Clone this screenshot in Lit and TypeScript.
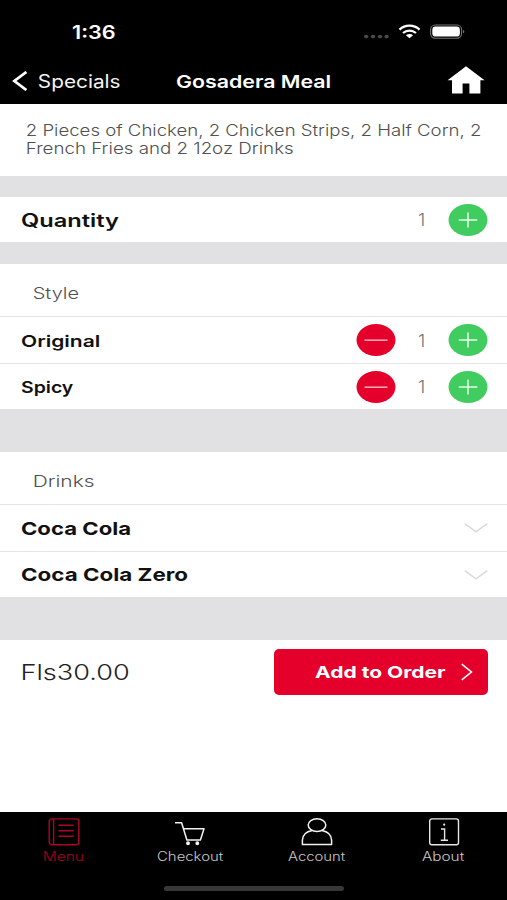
import { LitElement, html, css, svg } from "lit";
import { customElement, property } from "lit/decorators.js";

/** A single line of text stretched horizontally so its ink fills `span` pixels. */
@customElement("wide-text")
class WideText extends LitElement {
  @property() label = "";
  @property({ type: Number }) span = 100;

  static styles = css`
    :host { display: block; flex: none; line-height: 20px; white-space: nowrap; }
    .ink { display: inline-block; transform-origin: 0 50%; vertical-align: top; }
  `;

  render() {
    return html`<span class="ink">${this.label}</span>`;
  }

  updated() {
    const ink = this.renderRoot.querySelector(".ink") as HTMLElement;
    const cs = getComputedStyle(ink);
    const ctx = document.createElement("canvas").getContext("2d")!;
    ctx.font = `${cs.fontWeight} ${cs.fontSize} ${cs.fontFamily}`;
    const m = ctx.measureText(this.label);
    const scale = this.span / (m.actualBoundingBoxLeft + m.actualBoundingBoxRight);
    this.style.width = `${this.span}px`;
    ink.style.width = `${this.span}px`;
    ink.style.transform = `translateX(${m.actualBoundingBoxLeft * scale}px) scaleX(${scale})`;
  }
}

const plus = html`<svg class="round" width="40" height="32" viewBox="0 0 40 32">
  <ellipse cx="20" cy="16" rx="19.5" ry="16" fill="#41cc60" />
  <path d="M10.7 16H29.3M20 8.5V23.5" stroke="#e4fbe8" stroke-width="1.6" fill="none" />
</svg>`;

const minus = html`<svg class="round" width="40" height="32" viewBox="0 0 40 32">
  <ellipse cx="20" cy="16" rx="19.5" ry="16" fill="#e4002b" />
  <path d="M8.5 16.2H31.5" stroke="#fba6b2" stroke-width="1.6" fill="none" />
</svg>`;

const down = html`<svg width="24" height="12" viewBox="0 0 24 12">
  <path d="M0.8 1.6L12 9.8L23.2 1.6" stroke="#d9d9db" stroke-width="1.5" fill="none" />
</svg>`;

const icons = {
  menu: svg`<g stroke="#b00426" fill="none" stroke-width="1.4">
    <rect x="1.2" y="0.9" width="29.6" height="25.8" rx="2.6" />
    <path d="M5.6 1V26.6" />
    <path d="M10.5 7.3H25.5M10.5 12.8H25.5M10.5 18.3H25.5" />
  </g>`,
  cart: svg`<g stroke="#f2f2f2" fill="none" stroke-width="1.5" stroke-linejoin="round">
    <path d="M1 4.7H7.6L12.9 22H26.4L30 10.8H9.4" />
    <circle cx="14" cy="25.3" r="1.2" fill="#f2f2f2" />
    <circle cx="23.3" cy="25.3" r="1.2" fill="#f2f2f2" />
  </g>`,
  person: svg`<g stroke="#f2f2f2" fill="none" stroke-width="1.5" stroke-linejoin="round">
    <ellipse cx="16" cy="7.1" rx="8.8" ry="6.3" />
    <path d="M11.2 12.5C5.3 13.6 1.6 17.4 1.4 22.2V26.6H30.6V22.2C30.4 17.4 26.7 13.6 20.8 12.5" />
  </g>`,
  info: svg`<g stroke="#e6e6e6" fill="none" stroke-width="1.4">
    <rect x="1.7" y="0.9" width="28.8" height="25.8" rx="2.2" />
    <path d="M13 11H16.6V22.2M12.8 22.3H20" />
    <circle cx="16.2" cy="6.7" r="1.1" fill="#e6e6e6" stroke="none" />
  </g>`,
};

@customElement("app-root")
class AppRoot extends LitElement {
  static styles = css`
    :host {
      display: flex; flex-direction: column; width: 507px; height: 900px;
      box-sizing: border-box; overflow: hidden; background: #fff; color: #111;
      font-family: Inter, "Open Sans", sans-serif;
    }
    svg { display: block; flex: none; }
    .status {
      height: 64px; background: #000; color: #fff; display: flex; align-items: center;
      padding: 0 41px 0 72px; box-sizing: border-box;
    }
    .clock { font-size: 18px; font-weight: 600; margin-right: auto; padding-top: 1px; }
    .nav {
      height: 40px; background: #000; color: #fff; display: flex; align-items: center;
      padding: 0 22px 6px 12px; box-sizing: border-box;
    }
    .nav wide-text { padding-top: 1px; }
    .home { margin-bottom: 2px; }
    .back { font-size: 18px; margin-left: 10.5px; margin-right: 56.5px; color: #f4f4f4; }
    .title { font-size: 17.3px; font-weight: 600; margin-right: auto; }
    .desc {
      height: 72px; box-sizing: border-box; padding: 18px 0 0 27px; font-size: 15.8px;
      color: #505050; font-weight: 300;
    }
    .desc wide-text { line-height: 18px; }
    .gap { background: #e1e1e3; flex: none; }
    .g1 { height: 21px; } .g2 { height: 22px; } .g3 { height: 43px; } .g4 { height: 43px; }
    .row {
      display: flex; align-items: center; justify-content: space-between;
      box-sizing: border-box; height: 45px; padding: 0 19px 0 20.5px; flex: none;
    }
    .row > wide-text { padding-top: 2px; }
    .line { border-top: 1px solid #e6e6e8; height: 46.5px; padding-top: 1px; }
    .line > wide-text { padding-top: 1px; }
    .big { font-size: 18px; font-weight: 600; }
    .bold { font-size: 18px; font-weight: 650; }
    .small { font-size: 16px; font-weight: 600; }
    .heading {
      height: 52px; box-sizing: border-box; padding: 19px 0 0 34px; font-size: 16.3px;
      font-weight: 300; color: #505050;
    }
    .step { display: flex; align-items: center; }
    .count { font-size: 17px; font-weight: 300; color: #777; margin: 0 23.5px 0 22.5px; padding-top: 1px; }
    .total {
      display: flex; align-items: flex-start; justify-content: space-between;
      height: 172px; padding: 9px 19px 0 23px; box-sizing: border-box;
    }
    .price { font-size: 22px; font-weight: 300; color: #222; margin-top: 13px; }
    .add {
      width: 214px; height: 46px; border-radius: 5px; background: #e4002b; color: #fff;
      display: flex; align-items: center; box-sizing: border-box; padding-left: 40.5px; gap: 15.5px;
      font-size: 16.3px; font-weight: 700;
    }
    .tabs {
      flex: 1; background: #000; display: grid; grid-template-columns: repeat(4, 126.6px);
      grid-template-rows: 69px 1fr; color: #c9c9c9; font-size: 12.6px; font-weight: 300;
    }
    .tab { display: flex; flex-direction: column; align-items: center; padding: 6px 0 0 1px; }
    .tab wide-text { line-height: 20px; margin-top: 1px; }
    .tab.on { color: #a80022; }
    .pill { grid-column: 1 / -1; width: 180px; height: 5px; border-radius: 3px; background: #373737; margin: 5px 0 0 164px; }
  `;

  private text(cls: string, label: string, span: number) {
    return html`<wide-text class=${cls} .label=${label} .span=${span}></wide-text>`;
  }

  private tab(icon: unknown, label: string, span: number, on = false) {
    return html`<div class="tab ${on ? "on" : ""}">
      <svg width="32" height="28" viewBox="0 0 32 28">${icon}</svg>
      ${this.text("", label, span)}
    </div>`;
  }

  private stepper(withMinus: boolean) {
    return html`<div class="step">
      ${withMinus ? minus : ""}${this.text("count", "1", 6.5)}${plus}
    </div>`;
  }

  render() {
    return html`
      <div class="status">
        ${this.text("clock", "1:36", 43)}
        <svg width="104" height="18" viewBox="0 0 104 18">
          <g fill="#4a4a4a">
            <ellipse cx="4.2" cy="13.6" rx="2.2" ry="1.8" /><ellipse cx="11" cy="13.6" rx="2.2" ry="1.8" />
            <ellipse cx="18" cy="13.6" rx="2.2" ry="1.8" /><ellipse cx="24.6" cy="13.6" rx="2.2" ry="1.8" />
          </g>
          <g fill="none" stroke="#fff" stroke-width="2.3">
            <path d="M37.5 6.6C43.2 1.4 51.8 1.4 57.5 6.6" />
            <path d="M41 10C44.8 6.7 50.2 6.7 54 10" />
          </g>
          <path d="M47.5 15.2L43.9 12.3C46 10.6 49 10.6 51.1 12.3Z" fill="#fff" />
          <rect x="68.6" y="2" width="31" height="13.2" rx="4.6" fill="none" stroke="#777" stroke-width="1.1" />
          <rect x="70.3" y="3.6" width="27.6" height="10" rx="3.4" fill="#fff" />
          <path d="M101 6.9C102.8 7.3 102.8 9.9 101 10.3Z" fill="#777" />
        </svg>
      </div>
      <div class="nav">
        <svg width="16" height="20" viewBox="0 0 16 20">
          <path d="M14.4 1L2.4 10L14.4 19" fill="none" stroke="#fff" stroke-width="2.8" />
        </svg>
        ${this.text("back", "Specials", 81)}
        ${this.text("title", "Gosadera Meal", 154.5)}
        <svg class="home" width="38" height="28" viewBox="0 0 38 28">
          <path d="M19 0.3L37.6 14.3H33.4V27.6H22.4V17.4H15.6V27.6H5V14.3H0.6Z" fill="#fff" />
        </svg>
      </div>
      <div class="desc">
        ${this.text("", "2 Pieces of Chicken, 2 Chicken Strips, 2 Half Corn, 2", 453.5)}
        ${this.text("", "French Fries and 2 12oz Drinks", 266.5)}
      </div>
      <div class="gap g1"></div>
      <div class="row">${this.text("big", "Quantity", 98.5)}${this.stepper(false)}</div>
      <div class="gap g2"></div>
      <div class="heading">${this.text("", "Style", 44.5)}</div>
      <div class="row line">${this.text("small", "Original", 79)}${this.stepper(true)}</div>
      <div class="row line">${this.text("small", "Spicy", 53)}${this.stepper(true)}</div>
      <div class="gap g3"></div>
      <div class="heading">${this.text("", "Drinks", 60)}</div>
      <div class="row line">${this.text("bold", "Coca Cola", 109.5)}${down}</div>
      <div class="row line">${this.text("bold", "Coca Cola Zero", 167)}${down}</div>
      <div class="gap g4"></div>
      <div class="total">
        ${this.text("price", "Fls30.00", 106)}
        <div class="add">
          ${this.text("", "Add to Order", 131)}
          <svg width="12" height="18" viewBox="0 0 12 18">
            <path d="M0.8 1.2L10.4 9L0.8 16.8" fill="none" stroke="#fff" stroke-width="1.6" />
          </svg>
        </div>
      </div>
      <div class="tabs">
        ${this.tab(icons.menu, "Menu", 39.5, true)}
        ${this.tab(icons.cart, "Checkout", 66.5)}
        ${this.tab(icons.person, "Account", 57.5)}
        ${this.tab(icons.info, "About", 42.5)}
        <div class="pill"></div>
      </div>
    `;
  }
}
